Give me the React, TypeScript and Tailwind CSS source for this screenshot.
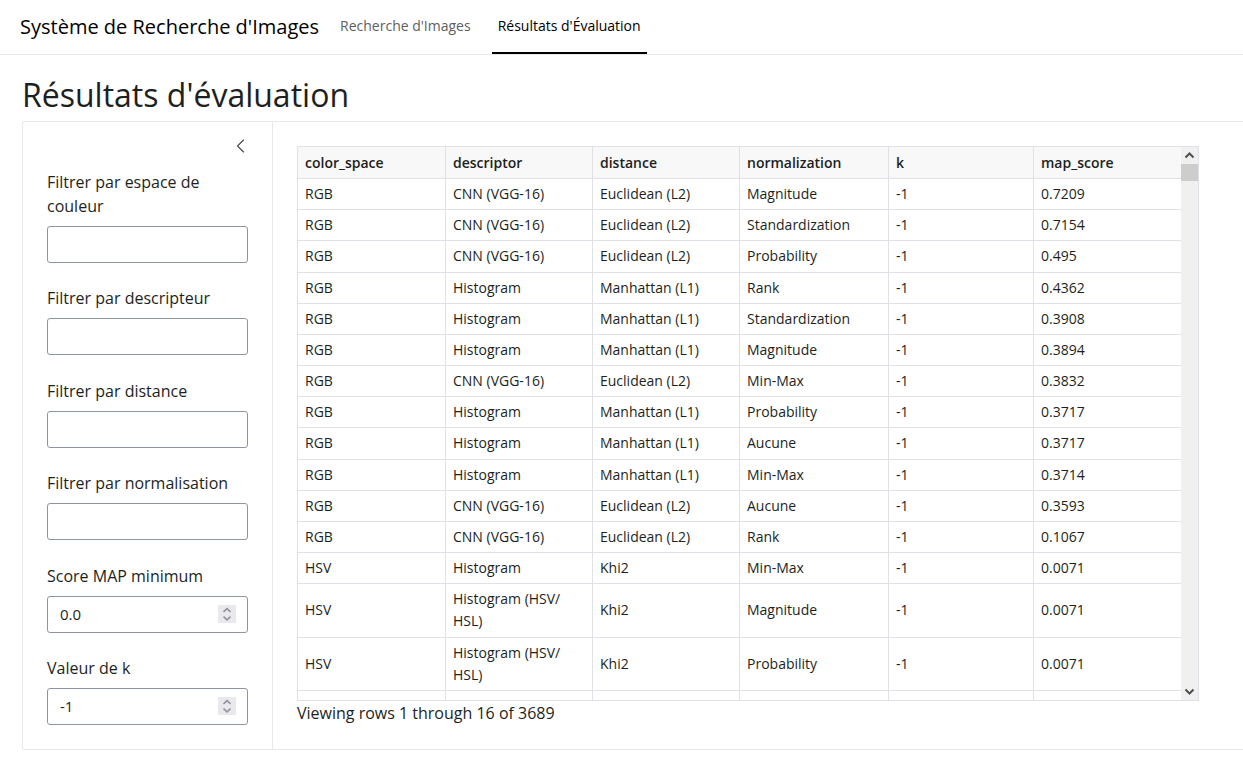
import React from "react";

type Row = [string, string, string, string, string, string];

const columns = [
  { name: "color_space", width: "w-[148px]" },
  { name: "descriptor", width: "w-[147px]" },
  { name: "distance", width: "w-[147px]" },
  { name: "normalization", width: "w-[149px]" },
  { name: "k", width: "w-[145px]" },
  { name: "map_score", width: "w-[147px]" },
];

const rows: Row[] = [
  ["RGB", "CNN (VGG-16)", "Euclidean (L2)", "Magnitude", "-1", "0.7209"],
  ["RGB", "CNN (VGG-16)", "Euclidean (L2)", "Standardization", "-1", "0.7154"],
  ["RGB", "CNN (VGG-16)", "Euclidean (L2)", "Probability", "-1", "0.495"],
  ["RGB", "Histogram", "Manhattan (L1)", "Rank", "-1", "0.4362"],
  ["RGB", "Histogram", "Manhattan (L1)", "Standardization", "-1", "0.3908"],
  ["RGB", "Histogram", "Manhattan (L1)", "Magnitude", "-1", "0.3894"],
  ["RGB", "CNN (VGG-16)", "Euclidean (L2)", "Min-Max", "-1", "0.3832"],
  ["RGB", "Histogram", "Manhattan (L1)", "Probability", "-1", "0.3717"],
  ["RGB", "Histogram", "Manhattan (L1)", "Aucune", "-1", "0.3717"],
  ["RGB", "Histogram", "Manhattan (L1)", "Min-Max", "-1", "0.3714"],
  ["RGB", "CNN (VGG-16)", "Euclidean (L2)", "Aucune", "-1", "0.3593"],
  ["RGB", "CNN (VGG-16)", "Euclidean (L2)", "Rank", "-1", "0.1067"],
  ["HSV", "Histogram", "Khi2", "Min-Max", "-1", "0.0071"],
  ["HSV", "Histogram (HSV/\u200bHSL)", "Khi2", "Magnitude", "-1", "0.0071"],
  ["HSV", "Histogram (HSV/\u200bHSL)", "Khi2", "Probability", "-1", "0.0071"],
];

const textFilters = [
  { id: "espace", label: "Filtrer par espace de couleur" },
  { id: "descripteur", label: "Filtrer par descripteur" },
  { id: "distance", label: "Filtrer par distance" },
  { id: "normalisation", label: "Filtrer par normalisation" },
];

const numberFilters = [
  { id: "score", label: "Score MAP minimum", value: "0.0", step: "0.1" },
  { id: "k", label: "Valeur de k", value: "-1", step: "1" },
];

function Spinner() {
  return (
    <svg
      aria-hidden="true"
      className="pointer-events-none absolute top-[9px] right-3 size-[18px] bg-[#e9e9ed]"
      viewBox="0 0 18 18"
      fill="none"
      stroke="#94949d"
      strokeWidth="1.7"
    >
      <path d="M5.5 6.8 9 3.6l3.500 3.200M5.500 11.700 9 14.900l3.500-3.200" />
    </svg>
  );
}

function Sidebar() {
  return (
    <aside className="relative flex w-[249px] shrink-0 flex-col justify-between px-6 pt-12 pb-6">
      <button type="button" aria-label="Replier le panneau" className="absolute top-4 right-6 flex h-4 w-4 items-center justify-center">
        <svg viewBox="0 0 16 16" className="size-4" fill="none" stroke="#44484c" strokeWidth="1.1" strokeLinecap="round" strokeLinejoin="round">
          <path d="M11.5 2 5.5 8l6 6" />
        </svg>
      </button>
      {textFilters.map((f) => (
        <div key={f.id}>
          <label htmlFor={f.id} className="mb-2 block">{f.label}</label>
          <input id={f.id} type="text" className="block h-[37px] w-full rounded-[3px] border border-[#8d959e] bg-white px-3 outline-none" />
        </div>
      ))}
      {numberFilters.map((f) => (
        <div key={f.id}>
          <label htmlFor={f.id} className="mb-2 block">{f.label}</label>
          <div className="relative">
            <input
              id={f.id}
              type="number"
              step={f.step}
              defaultValue={f.value}
              className="block h-[37px] w-full rounded-[3px] border border-[#8d959e] bg-white px-3 text-[15px] outline-none [appearance:textfield]"
            />
            <Spinner />
          </div>
        </div>
      ))}
    </aside>
  );
}

function ScrollTrack() {
  return (
    <div aria-hidden="true" className="flex w-[17px] shrink-0 flex-col items-center bg-[#f0f0f0]">
      <svg viewBox="0 0 17 17" className="size-[17px] shrink-0" fill="none" stroke="#505050" strokeWidth="2">
        <path d="M4.500 10.500 8.500 6.500l4 4" />
      </svg>
      <div className="h-[17px] w-full bg-[#cdcdcd]" />
      <div className="flex-1" />
      <svg viewBox="0 0 17 17" className="size-[17px] shrink-0" fill="none" stroke="#505050" strokeWidth="2">
        <path d="M4.500 6.500l4 4 4-4" />
      </svg>
    </div>
  );
}

function Results() {
  return (
    <main className="min-w-0 flex-1 border-l border-[#e8e9eb] py-6 pr-11 pl-6">
      <div className="flex h-[555px] overflow-hidden border border-[#dee2e6]">
        <div className="min-w-0 flex-1 overflow-hidden">
          <table className="h-[597px] w-full table-fixed border-separate border-spacing-0 text-left text-sm leading-[22px]">
            <colgroup>
              {columns.map((c) => (
                <col key={c.name} className={c.width} />
              ))}
            </colgroup>
            <thead>
              <tr>
                {columns.map((c) => (
                  <th key={c.name} scope="col" className="h-8 border-r border-b border-[#dee2e6] bg-[#f8f8f8] px-[7px] py-1 font-semibold last:border-r-0">
                    {c.name}
                  </th>
                ))}
              </tr>
            </thead>
            <tbody>
              {rows.map((row, i) => (
                <tr key={i}>
                  {row.map((cell, j) => (
                    <td key={j} className="border-r border-b border-[#dee2e6] px-[7px] py-1 last:border-r-0">
                      {cell}
                    </td>
                  ))}
                </tr>
              ))}
              <tr aria-hidden="true">
                {columns.map((c) => (
                  <td key={c.name} className="h-[53px] border-r border-b border-[#dee2e6] last:border-r-0" />
                ))}
              </tr>
            </tbody>
          </table>
        </div>
        <ScrollTrack />
      </div>
      <p>Viewing rows 1 through 16 of 3689</p>
    </main>
  );
}

export default function App() {
  return (
    <div className="bg-white font-['Open_Sans','Noto_Sans',sans-serif] text-base leading-6 text-[#1d1f21]">
      <nav className="flex h-[55px] border-b border-[#e8e9eb] pl-5">
        <a href="#" className="mr-4 flex items-center text-xl text-black">Système de Recherche d'Images</a>
        <a href="#recherche" className="flex items-center border-b-2 border-transparent px-[5px] text-sm text-[#606060]">Recherche d'Images</a>
        <a href="#resultats" aria-current="page" className="ml-4 flex items-center border-b-2 border-black px-1.5 text-sm font-medium text-black">Résultats d'Évaluation</a>
      </nav>
      <div className="pl-[22px]">
        <h1 className="pt-5 pb-1.5 text-[32px] leading-10">Résultats d'évaluation</h1>
        <div className="flex rounded-l-[3px] border border-r-0 border-[#e8e9eb]">
          <Sidebar />
          <Results />
        </div>
      </div>
    </div>
  );
}
